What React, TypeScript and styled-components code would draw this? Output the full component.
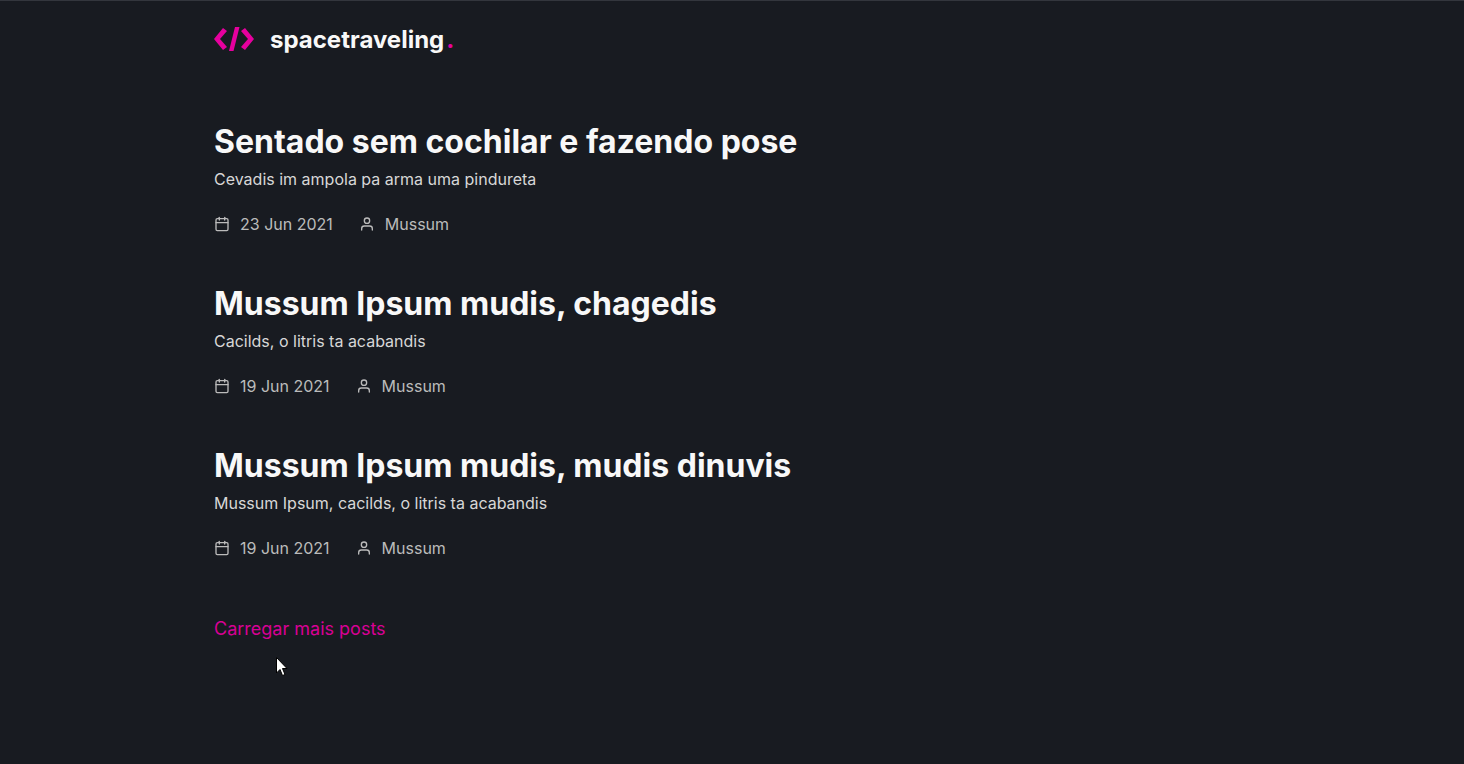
import React from 'react';
import styled, { createGlobalStyle } from 'styled-components';
import { FiCalendar, FiUser } from 'react-icons/fi';

const GlobalStyle = createGlobalStyle`
  * { box-sizing: border-box; margin: 0; padding: 0; }
  body {
    background: #181b21;
    color: #f8f8f8;
    font-family: Inter, "Liberation Sans", sans-serif;
  }
`;

const Page = styled.div`
  position: relative;
  min-height: 100vh;
  border-top: 1px solid #33363d;
  padding: 24px 40px 64px;
`;

const Container = styled.div`
  width: 100%;
  max-width: 1036px;
  margin: 0 auto;
`;

const Header = styled.header`
  display: flex;
  align-items: center;
`;

const Logo = styled.a`
  display: flex;
  align-items: center;
  gap: 16px;
  color: inherit;
  text-decoration: none;
`;

const LogoText = styled.span`
  font-size: 24px;
  line-height: 29px;
  font-weight: 700;
`;

const Dot = styled.span`
  color: #e6009e;
  margin-left: 2px;
`;

const Posts = styled.main`
  display: flex;
  flex-direction: column;
  align-items: flex-start;
  gap: 46px;
  padding-top: 64px;
`;

const Post = styled.a`
  display: block;
  color: inherit;
  text-decoration: none;
`;

const Title = styled.h2`
  font-size: 32px;
  line-height: 48px;
  font-weight: 700;
`;

const Subtitle = styled.p`
  font-size: 16px;
  line-height: 26px;
  color: #d7d7d7;
`;

const Meta = styled.div`
  display: flex;
  gap: 26px;
  margin-top: 22px;
  color: #bbbbbb;
  font-size: 16px;
  line-height: 20px;
`;

const MetaItem = styled.span`
  display: flex;
  align-items: center;
  gap: 10px;
`;

const LoadMore = styled.button`
  margin-top: 14px;
  border: 0;
  background: transparent;
  color: #d80094;
  font: 400 18px/22px Inter, "Liberation Sans", sans-serif;
  cursor: pointer;
`;

const Pointer = styled.svg`
  position: absolute;
  left: 275px;
  top: 655px;
`;

const posts = [
  { title: 'Sentado sem cochilar e fazendo pose', subtitle: 'Cevadis im ampola pa arma uma pindureta', date: '23 Jun 2021', author: 'Mussum' },
  { title: 'Mussum Ipsum mudis, chagedis', subtitle: 'Cacilds, o litris ta acabandis', date: '19 Jun 2021', author: 'Mussum' },
  { title: 'Mussum Ipsum mudis, mudis dinuvis', subtitle: 'Mussum Ipsum, cacilds, o litris ta acabandis', date: '19 Jun 2021', author: 'Mussum' },
];

export default function App() {
  return (
    <Page>
      <GlobalStyle />
      <Container>
        <Header>
          <Logo href="/" aria-label="spacetraveling">
            <svg width="40" height="25" viewBox="0 0 40 25" fill="#e6009e" aria-hidden="true">
              <path d="M9 1 L13 4 L6 12 L13 20 L9 23 L0 12 Z" />
              <path d="M31 1 L27 4 L34 12 L27 20 L31 23 L40 12 Z" />
              <path d="M21 0 H25.500 L19.500 24 H15 Z" />
            </svg>
            <LogoText>spacetraveling<Dot>.</Dot></LogoText>
          </Logo>
        </Header>
        <Posts>
          {posts.map((post) => (
            <Post href="#" key={post.title}>
              <Title>{post.title}</Title>
              <Subtitle>{post.subtitle}</Subtitle>
              <Meta>
                <MetaItem><FiCalendar aria-hidden="true" /><time>{post.date}</time></MetaItem>
                <MetaItem><FiUser aria-hidden="true" /><span>{post.author}</span></MetaItem>
              </Meta>
            </Post>
          ))}
          <LoadMore type="button">Carregar mais posts</LoadMore>
        </Posts>
      </Container>
      <Pointer width="13" height="21" viewBox="0 0 13 21" aria-hidden="true">
        <path d="M1.500 1.500 V17 L5 13.500 L7.500 19.500 L10 18.500 L7.500 12.500 H12 Z" fill="#fff" stroke="#000" />
      </Pointer>
    </Page>
  );
}
